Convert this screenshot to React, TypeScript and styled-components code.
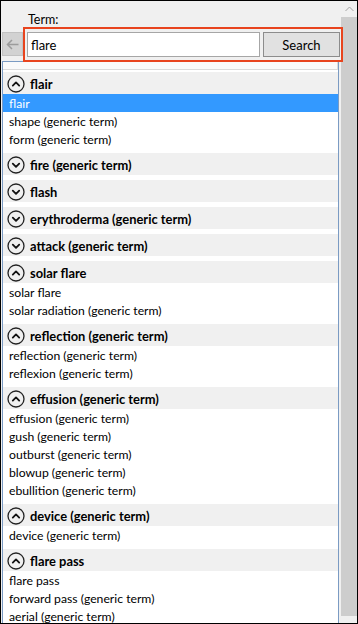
import React from "react";
import styled, { createGlobalStyle } from "styled-components";

const Global = createGlobalStyle`
  html, body { margin: 0; padding: 0; background: #f0f0f0; }
  * { box-sizing: border-box; }
`;

const Frame = styled.div`
  position: relative;
  width: 358px;
  height: 624px;
  border: 1px solid #000;
  background: #f0f0f0;
  display: flex;
  overflow: hidden;
  font-family: Lato, "Noto Sans", sans-serif;
  font-size: 12.5px;
  color: #000;
`;

const Main = styled.div`
  width: 340px;
  display: flex;
  flex-direction: column;
  padding: 11px 0 0 1px;
  min-height: 0;
`;

const Label = styled.div`
  height: 16px;
  line-height: 16px;
  margin: 0 0 4px 26px;
`;

const SearchRow = styled.div`
  display: flex;
  align-items: stretch;
  height: 25px;
  width: 338px;
  margin-bottom: 4px;
`;

const BackButton = styled.button`
  width: 21px;
  height: 24px;
  padding: 0;
  margin: 0 4px 0 0;
  border: 1px solid #c2c2c2;
  background: #d2d2d2;
  display: flex;
  align-items: center;
  justify-content: center;
`;

const Input = styled.input`
  width: 233px;
  height: 25px;
  margin: 0 3px 0 0;
  border: 1px solid #a6a6a6;
  background: #fff;
  padding: 0 0 0 3px;
  font-family: inherit;
  font-size: 13px;
  color: #000;
  outline: none;
`;

const SearchButton = styled.button`
  width: 77px;
  height: 25px;
  margin: 0;
  border: 1px solid #8c8c8c;
  background: #e1e1e1;
  font-family: inherit;
  font-size: 13px;
  color: #000;
  padding: 0;
`;

const Highlight = styled.div`
  position: absolute;
  left: 22px;
  top: 26px;
  width: 320px;
  height: 35px;
  border: 2px solid #e8441e;
  pointer-events: none;
`;

const ListPanel = styled.div`
  flex: 1;
  width: 337px;
  border: 1px solid #7b9bc3;
  border-bottom: none;
  background: #fff;
  overflow: hidden;
  display: flex;
  flex-direction: column;
  gap: 5px;
`;

const TopStrip = styled.div`
  height: 8px;
  flex: none;
  background: #fafafa;
  border-bottom: 1px solid #dadada;
  border-right: 1px solid #dadada;
  margin-bottom: -3px;
`;

const Group = styled.div`
  display: flex;
  flex-direction: column;
  flex: none;
`;

const Header = styled.div`
  height: 22px;
  background: #f0f0f0;
  display: flex;
  align-items: center;
  padding: 1px 0 0 4px;
  gap: 5px;
  font-weight: 700;
  font-size: 12.9px;
`;

const Row = styled.div<{ $selected?: boolean }>`
  height: 18px;
  line-height: 19px;
  padding-left: 6px;
  font-size: 12.2px;
  background: ${(p) => (p.$selected ? "#3399ff" : "#fff")};
  color: ${(p) => (p.$selected ? "#fff" : "#000")};
  white-space: nowrap;
`;

const Scrollbar = styled.div`
  width: 16px;
  display: flex;
  flex-direction: column;
  background: #f0f0f0;
`;

const ScrollArrow = styled.div<{ $h: number }>`
  height: ${(p) => p.$h}px;
  flex: none;
  display: flex;
  align-items: center;
  justify-content: center;
`;

const Thumb = styled.div`
  flex: 1;
  background: #cdcdcd;
`;

const Toggle = ({ open }: { open: boolean }) => (
  <svg width="18" height="18" viewBox="0 0 18 18">
    <circle cx="9" cy="9" r="8" fill="none" stroke="#222" strokeWidth="1.3" />
    <path
      d={open ? "M5.8 10.6 L9 7.4 L12.2 10.6" : "M5.8 7.6 L9 10.8 L12.2 7.6"}
      fill="none"
      stroke="#111"
      strokeWidth="1.8"
      strokeLinecap="round"
      strokeLinejoin="round"
    />
  </svg>
);

type G = { title: string; open: boolean; rows: string[]; selected?: number };

const groups: G[] = [
  { title: "flair", open: true, rows: ["flair", "shape (generic term)", "form (generic term)"], selected: 0 },
  { title: "fire (generic term)", open: false, rows: [] },
  { title: "flash", open: false, rows: [] },
  { title: "erythroderma (generic term)", open: false, rows: [] },
  { title: "attack (generic term)", open: false, rows: [] },
  { title: "solar flare", open: true, rows: ["solar flare", "solar radiation (generic term)"] },
  { title: "reflection (generic term)", open: true, rows: ["reflection (generic term)", "reflexion (generic term)"] },
  {
    title: "effusion (generic term)",
    open: true,
    rows: [
      "effusion (generic term)",
      "gush (generic term)",
      "outburst (generic term)",
      "blowup (generic term)",
      "ebullition (generic term)",
    ],
  },
  { title: "device (generic term)", open: true, rows: ["device (generic term)"] },
  { title: "flare pass", open: true, rows: ["flare pass", "forward pass (generic term)", "aerial (generic term)"] },
];

export default function App() {
  return (
    <>
      <Global />
      <Frame>
        <Main>
          <Label>Term:</Label>
          <SearchRow>
            <BackButton aria-label="Back">
              <svg width="13" height="11" viewBox="0 0 13 11">
                <path d="M1.5 5.5 H12.5 M6 1 L1.5 5.5 L6 10" fill="none" stroke="#9b9b9b" strokeWidth="1.5" />
              </svg>
            </BackButton>
            <Input defaultValue="flare" />
            <SearchButton>Search</SearchButton>
          </SearchRow>
          <ListPanel>
            <TopStrip />
            {groups.map((g) => (
              <Group key={g.title}>
                <Header>
                  <Toggle open={g.open} />
                  <span>{g.title}</span>
                </Header>
                {g.rows.map((r, i) => (
                  <Row key={r} $selected={g.selected === i}>
                    {r}
                  </Row>
                ))}
              </Group>
            ))}
          </ListPanel>
        </Main>
        <Scrollbar>
          <ScrollArrow $h={16}>
            <svg width="9" height="6" viewBox="0 0 9 6">
              <path d="M0.5 5 L4.5 1 L8.5 5" fill="none" stroke="#a3a3a3" strokeWidth="1" />
            </svg>
          </ScrollArrow>
          <Thumb />
          <ScrollArrow $h={7} />
        </Scrollbar>
        <Highlight />
      </Frame>
    </>
  );
}
